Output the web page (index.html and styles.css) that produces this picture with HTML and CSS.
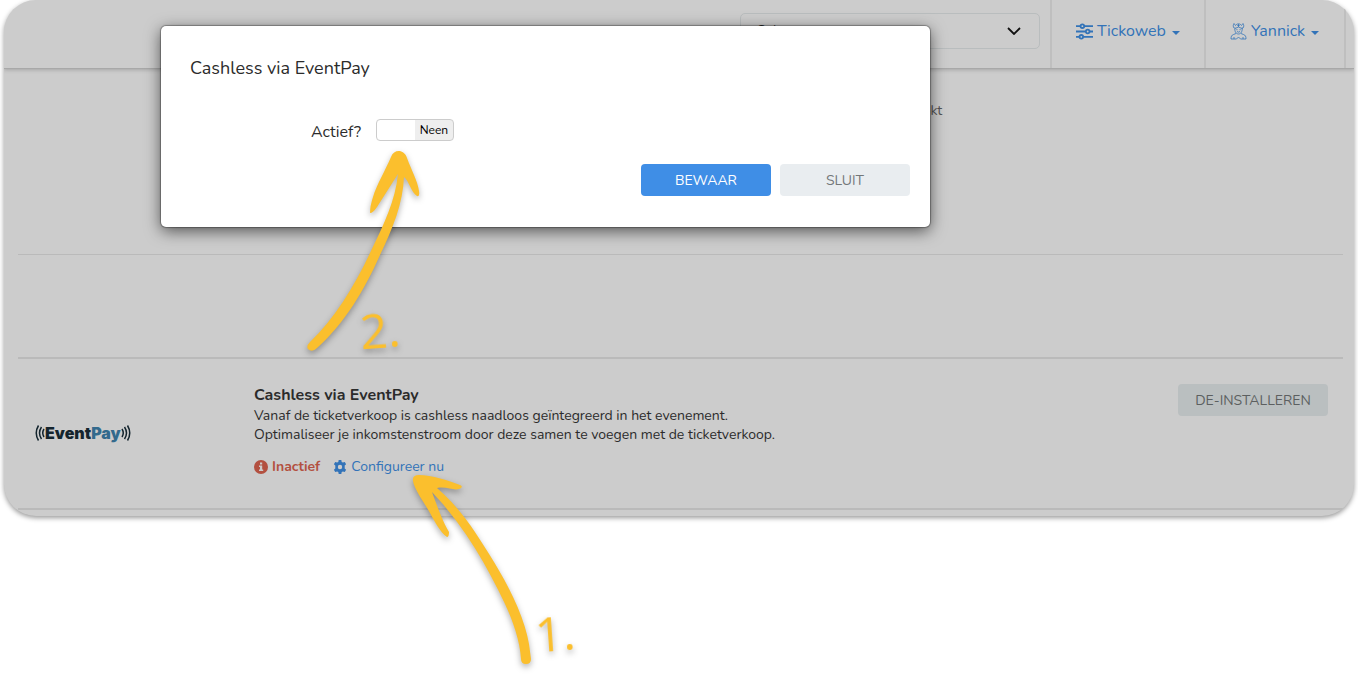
FILE: index.html
```
<!DOCTYPE html>
<html lang="nl">
<head>
  <meta charset="UTF-8">
  <title>Cashless via EventPay</title>
  <meta name="viewport" content="width=device-width, initial-scale=1.0">
  <link rel="stylesheet" href="styles.css">
</head>
<body>
  <div class="stage">
    <main class="panel">
      <header class="topbar">
        <select class="event-select" aria-label="Evenement">
          <option>Selecteer</option>
        </select>
        <nav class="topnav">
          <a href="#" class="nav-item nav-org">
            <svg class="nav-icon" viewBox="0 0 16 16" aria-hidden="true">
              <path d="M0 3h4M8 3h8M0 8h9M13 8h3M0 13h3M7 13h9"/>
              <circle cx="6" cy="3" r="1.7"/>
              <circle cx="11" cy="8" r="1.7"/>
              <circle cx="5" cy="13" r="1.7"/>
            </svg>
            <span>Tickoweb</span>
            <span class="caret"></span>
          </a>
          <a href="#" class="nav-item nav-user">
            <svg class="nav-icon thin" viewBox="0 0 16 17" aria-hidden="true">
              <path d="M3.500 5C2.500 3.500 2.500 2 3.500 .5L5 2.500C6.500 .3 9.500 .3 11 2.500L12.500 .5C13.500 2 13.500 3.500 12.500 5L11.700 5.500"/>
              <path d="M4.300 4.500C4 8.500 5.500 11 8 11s4-2.500 3.700-6.500M4.500 5.500L8 4l3.500 1.500M8 1v3M6.800 2.500h2.400"/>
              <path d="M5.800 6.700h1.200M9 6.700h1.200M6.500 8.500Q8 9.800 9.500 8.500"/>
              <path d="M5.500 10.500L3 11.500C1 12.200.5 13.500.5 16h5.500l2-2 2 2h5.500c0-2.500-.5-3.800-2.500-4.500l-2.500-1M3.500 16v-2M12.500 16v-2"/>
            </svg>
            <span>Yannick</span>
            <span class="caret"></span>
          </a>
        </nav>
      </header>

      <section class="row row-contact">
        <p>akt</p>
      </section>
      <section class="row row-empty"></section>
      <section class="row row-app">
        <div class="logo">
          <svg class="waves" viewBox="0 0 10 18" aria-hidden="true">
            <path d="M3.500 1.500Q-1 9 3.500 16.500M6.500 3Q2.500 9 6.500 15M9 5Q6.500 9 9 13"/>
          </svg>
          <span class="logo-text">Event<span class="logo-pay">Pay</span></span>
          <svg class="waves" viewBox="0 0 10 18" aria-hidden="true">
            <path d="M6.500 1.500Q11 9 6.500 16.500M3.500 3Q7.500 9 3.500 15M1 5Q3.500 9 1 13"/>
          </svg>
        </div>
        <div class="app-info">
          <h2>Cashless via EventPay</h2>
          <p>Vanaf de ticketverkoop is cashless naadloos geïntegreerd in het evenement.<br>
            Optimaliseer je inkomstenstroom door deze samen te voegen met de ticketverkoop.</p>
          <div class="app-status">
            <span class="inactive">
              <svg class="status-icon" viewBox="0 0 14 14" aria-hidden="true">
                <circle cx="7" cy="7" r="7" fill="currentColor"/>
                <path d="M6 2.500h2.200v2H6zM5 5.600h3.200v4H9.200v1.500H5v-1.500h1V7H5z" fill="#cccccc"/>
              </svg>
              Inactief
            </span>
            <a href="#" class="configure">
              <svg class="status-icon" viewBox="0 0 14 14" aria-hidden="true">
                <path fill="currentColor" fill-rule="evenodd" d="M5.700 0h2.600l.4 1.900 1.200.7 1.900-.6 1.300 2.300-1.400 1.300v2.800l1.400 1.300-1.300 2.300-1.900-.6-1.200.7-.4 1.900H5.700l-.4-1.900-1.200-.7-1.900.6L.9 9.700l1.400-1.300V5.600L.9 4.300 2.200 2l1.900.6 1.200-.7zM7 4.800a2.200 2.200 0 1 0 0 4.400 2.200 2.200 0 0 0 0-4.400z"/>
              </svg>
              Configureer nu
            </a>
          </div>
        </div>
        <button type="button" class="btn btn-uninstall">DE-INSTALLEREN</button>
      </section>
    </main>

    <form class="modal" role="dialog" aria-labelledby="modalTitle">
      <h1 id="modalTitle">Cashless via EventPay</h1>
      <div class="field">
        <label for="active">Actief?</label>
        <span class="switch">
          <input type="checkbox" id="active">
          <span class="switch-text">Neen</span>
        </span>
      </div>
      <div class="actions">
        <button type="button" class="btn btn-save">BEWAAR</button>
        <button type="button" class="btn btn-close">SLUIT</button>
      </div>
    </form>

    <!-- Step 2: toggle -->
    <svg class="arrow arrow-two" viewBox="300 145 130 215" aria-hidden="true">
      <path d="M391 157C394 149 404 149 407 158C411 169 418 182 419 191Q420 197 417 196C411 192 409 181 404 177C403 203 393 228 380 255C365 289 345 323 317 348Q312 353 308 349Q306 346 310 342C334 319 354 287 370 253C385 222 395 201 398 174L377 207Q373 213 370 213Q370 206 373 197C377 184 385 171 391 157Z"/>
    </svg>
    <span class="step step-two">2.</span>

    <!-- Step 1: configure -->
    <svg class="arrow arrow-one" viewBox="405 468 135 205" aria-hidden="true">
      <path d="M413 481Q412 475 419 475C431 475 450 481 460 485Q463 486 461 488C455 492 448 486 437 488C456 504 471 525 484 546C506 580 524 614 529 644L531 659Q531 664 526 664Q521 664 521 659C520 641 513 621 505 604C487 566 465 527 432 492C437 506 443 522 449 532Q449 537 447 537C440 532 435 522 430 513C424 502 414 489 413 481Z"/>
    </svg>
    <span class="step step-one">1.</span>
  </div>
</body>
</html>
```
FILE: styles.css
```
:root {
  --panel: #cccccc;
  --line: #bababa;
  --text: #2b2b2b;
  --link: #3273b8;
  --blue: #3f8ee6;
  --red: #b35040;
  --yellow: #fbbf2d;
}

* {
  margin: 0;
  padding: 0;
  box-sizing: border-box;
}

body {
  background: #ffffff;
  color: var(--text);
  font-family: Nunito, Lato, sans-serif;
  font-size: 14px;
}

a {
  color: var(--link);
  text-decoration: none;
}

.stage {
  position: relative;
  min-height: 100vh;
  padding: 0 4px;
  overflow: hidden;
}

.panel {
  background: var(--panel);
  border-radius: 32px;
  box-shadow: 0 2px 5px rgba(0, 0, 0, 0.4);
  overflow: hidden;
  padding-bottom: 6px;
}

/* Top bar */
.topbar {
  display: flex;
  justify-content: flex-end;
  align-items: center;
  height: 69px;
  padding-right: 8px;
  border-bottom: 1px solid #a8a8a8;
  box-shadow: 0 1px 4px rgba(0, 0, 0, 0.2);
}

.event-select {
  width: 300px;
  height: 36px;
  margin: 0 10px 7px 0;
  padding: 0 16px;
  border: 1px solid #b9bdbe;
  border-radius: 5px;
  appearance: none;
  background: url("data:image/svg+xml,%3Csvg xmlns='http://www.w3.org/2000/svg' viewBox='0 0 14 8'%3E%3Cpath d='M1 1l6 6 6-6' fill='none' stroke='%23111' stroke-width='1.8'/%3E%3C/svg%3E") no-repeat right 18px center / 14px 8px;
  color: var(--text);
  font: inherit;
}

.topnav {
  display: flex;
  align-self: stretch;
  border-right: 2px solid #bfbfbf;
}

.nav-item {
  display: flex;
  align-items: center;
  gap: 4px;
  padding: 0 24px 6px;
  border-left: 2px solid #bfbfbf;
  font-size: 16px;
}

.nav-org {
  width: 154px;
}

.nav-user {
  width: 140px;
}

.nav-icon {
  flex-shrink: 0;
  width: 17px;
  height: 17px;
  fill: none;
  stroke: currentColor;
  stroke-width: 1.7;
}

.nav-icon.thin {
  stroke-width: 0.8;
}

.caret {
  margin: 3px 0 0 2px;
  border: 4px solid transparent;
  border-top-color: currentColor;
  border-bottom: 0;
}

/* Rows */
.row {
  margin: 0 11px 0 14px;
  border-bottom: 1px solid var(--line);
}

.row-contact {
  height: 186px;
  padding: 32px 0 0 905px;
  color: #555555;
}

.row-empty {
  height: 104px;
  border-bottom-width: 2px;
}

.row-app {
  display: flex;
  align-items: flex-start;
  padding: 25px 15px 31px 17px;
  border-bottom-width: 2px;
}

.logo {
  display: flex;
  align-items: center;
  width: 219px;
  padding-top: 39px;
}

.logo-text {
  color: #14252e;
  font-family: Inter, sans-serif;
  font-size: 16px;
  font-weight: 900;
  line-height: 20px;
}

.logo-pay {
  color: #336a8d;
}

.waves {
  width: 10px;
  height: 18px;
  fill: none;
  stroke: #14252e;
  stroke-width: 1.5;
}

.app-info {
  flex: 1;
}

.app-info h2 {
  font-size: 16px;
  line-height: 22px;
}

.app-info p {
  line-height: 19px;
}

.app-status {
  display: flex;
  gap: 13px;
  margin-top: 13px;
  line-height: 20px;
}

.inactive,
.configure {
  display: flex;
  align-items: center;
  gap: 4px;
}

.inactive {
  color: var(--red);
  font-weight: 700;
}

.status-icon {
  width: 14px;
  height: 14px;
}

/* Buttons */
.btn {
  height: 32px;
  border: 0;
  border-radius: 4px;
  font: inherit;
  cursor: pointer;
}

.btn-uninstall {
  width: 150px;
  background: #babfc0;
  color: #5c5f60;
}

.btn-save {
  width: 130px;
  background: var(--blue);
  color: #ffffff;
}

.btn-close {
  width: 130px;
  background: #e9edf0;
  color: #737779;
}

/* Modal */
.modal {
  position: absolute;
  top: 26px;
  left: 161px;
  width: 769px;
  max-width: calc(100% - 180px);
  padding: 30px 20px 31px 29px;
  border-radius: 5px;
  background: #ffffff;
  box-shadow: 0 0 1px 1px rgba(0, 0, 0, 0.3), 0 4px 16px rgba(0, 0, 0, 0.6);
}

.modal h1 {
  font-size: 18px;
  font-weight: 400;
  line-height: 24px;
}

.field {
  display: flex;
  align-items: flex-start;
  gap: 15px;
  margin: 39px 0 19px 121px;
  font-size: 16px;
  line-height: 26px;
}

.switch {
  display: grid;
  width: 78px;
  height: 22px;
}

.switch input,
.switch-text {
  grid-area: 1 / 1;
}

.switch input {
  appearance: none;
  border: 1px solid #cccccc;
  border-radius: 4px;
  background: linear-gradient(90deg, #ffffff 50%, #eeeeee 50%);
  cursor: pointer;
}

.switch-text {
  justify-self: end;
  padding-right: 6px;
  color: #000000;
  font-size: 12px;
  line-height: 22px;
  pointer-events: none;
}

.actions {
  display: flex;
  justify-content: flex-end;
  gap: 9px;
}

/* Step markers drawn over the page */
.arrow,
.step {
  position: absolute;
  filter: drop-shadow(0 3px 3px rgba(0, 0, 0, 0.3));
  pointer-events: none;
}

.arrow {
  fill: var(--yellow);
}

.arrow-two {
  top: 145px;
  left: 300px;
  width: 130px;
  height: 215px;
}

.arrow-one {
  top: 468px;
  left: 405px;
  width: 135px;
  height: 205px;
}

.step {
  color: var(--yellow);
  font-family: "Open Sans", sans-serif;
  font-size: 48px;
  font-weight: 500;
  line-height: 60px;
  transform: rotate(-4deg);
}

.step-two {
  top: 300px;
  left: 360px;
}

.step-one {
  top: 603px;
  left: 535px;
}
```
